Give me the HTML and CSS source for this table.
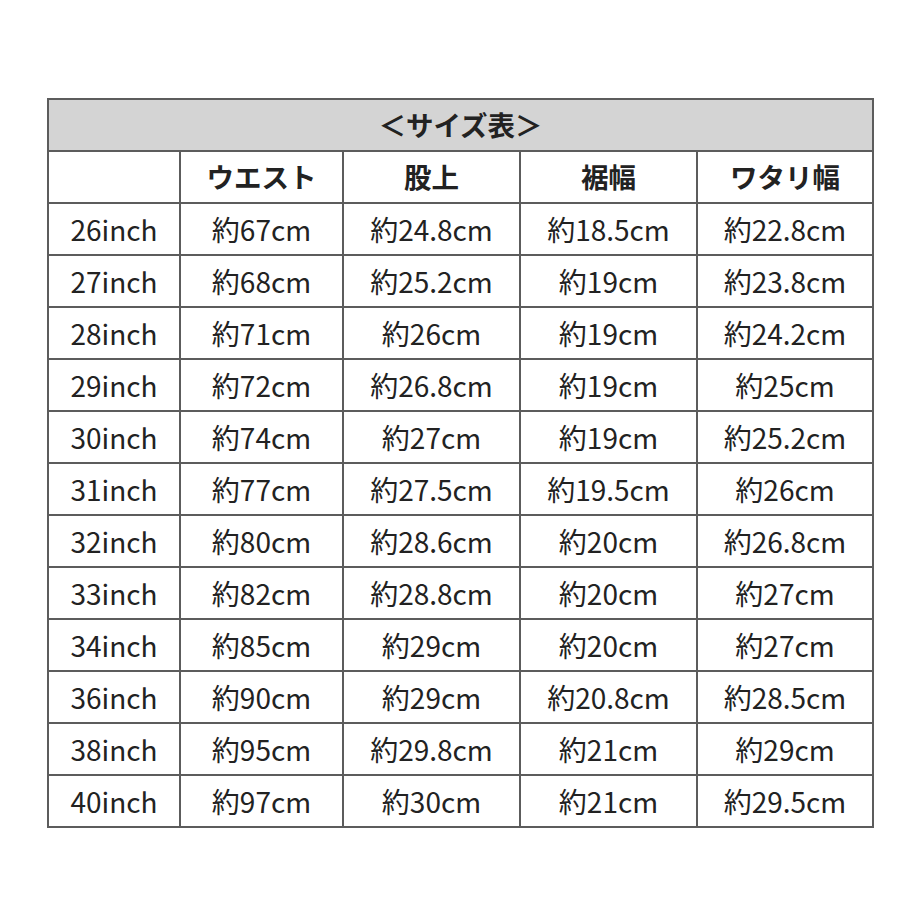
FILE: index.html
```html
<!DOCTYPE html>
<html lang="ja">
<head>
<meta charset="utf-8">
<link rel="stylesheet" href="styles.css">
</head>
<body>
<div class="page">
<table class="size-table">
<colgroup>
<col class="c1"><col class="c2"><col class="c3"><col class="c4"><col class="c5">
</colgroup>
<thead>
<tr class="title-row"><th colspan="5">＜サイズ表＞</th></tr>
<tr class="head-row"><th></th><th>ウエスト</th><th>股上</th><th>裾幅</th><th>ワタリ幅</th></tr>
</thead>
<tbody>
<tr><td>26inch</td><td>約67cm</td><td>約24.8cm</td><td>約18.5cm</td><td>約22.8cm</td></tr>
<tr><td>27inch</td><td>約68cm</td><td>約25.2cm</td><td>約19cm</td><td>約23.8cm</td></tr>
<tr><td>28inch</td><td>約71cm</td><td>約26cm</td><td>約19cm</td><td>約24.2cm</td></tr>
<tr><td>29inch</td><td>約72cm</td><td>約26.8cm</td><td>約19cm</td><td>約25cm</td></tr>
<tr><td>30inch</td><td>約74cm</td><td>約27cm</td><td>約19cm</td><td>約25.2cm</td></tr>
<tr><td>31inch</td><td>約77cm</td><td>約27.5cm</td><td>約19.5cm</td><td>約26cm</td></tr>
<tr><td>32inch</td><td>約80cm</td><td>約28.6cm</td><td>約20cm</td><td>約26.8cm</td></tr>
<tr><td>33inch</td><td>約82cm</td><td>約28.8cm</td><td>約20cm</td><td>約27cm</td></tr>
<tr><td>34inch</td><td>約85cm</td><td>約29cm</td><td>約20cm</td><td>約27cm</td></tr>
<tr><td>36inch</td><td>約90cm</td><td>約29cm</td><td>約20.8cm</td><td>約28.5cm</td></tr>
<tr><td>38inch</td><td>約95cm</td><td>約29.8cm</td><td>約21cm</td><td>約29cm</td></tr>
<tr><td>40inch</td><td>約97cm</td><td>約30cm</td><td>約21cm</td><td>約29.5cm</td></tr>
</tbody>
</table>
</div>
</body>
</html>
```

FILE: styles.css
```css
html, body {
  margin: 0;
  padding: 0;
  background: #ffffff;
}
.page {
  padding: 98px 0 0 47px;
}
.size-table {
  border-collapse: collapse;
  table-layout: fixed;
  width: 825px;
  font-family: "Noto Sans CJK JP", "Noto Sans", sans-serif;
  color: #222222;
  font-size: 28px;
}
.c1 { width: 132px; }
.c2 { width: 163px; }
.c3 { width: 177px; }
.c4 { width: 177px; }
.c5 { width: 176px; }
.size-table th,
.size-table td {
  border: 2px solid #5c5c5c;
  height: 50px;
  padding: 0;
  text-align: center;
  vertical-align: middle;
  line-height: 1;
}
.size-table th {
  font-weight: 700;
  font-size: 27.5px;
}
.title-row th {
  background: #d4d4d4;
}
.size-table td {
  font-weight: 400;
}
```
